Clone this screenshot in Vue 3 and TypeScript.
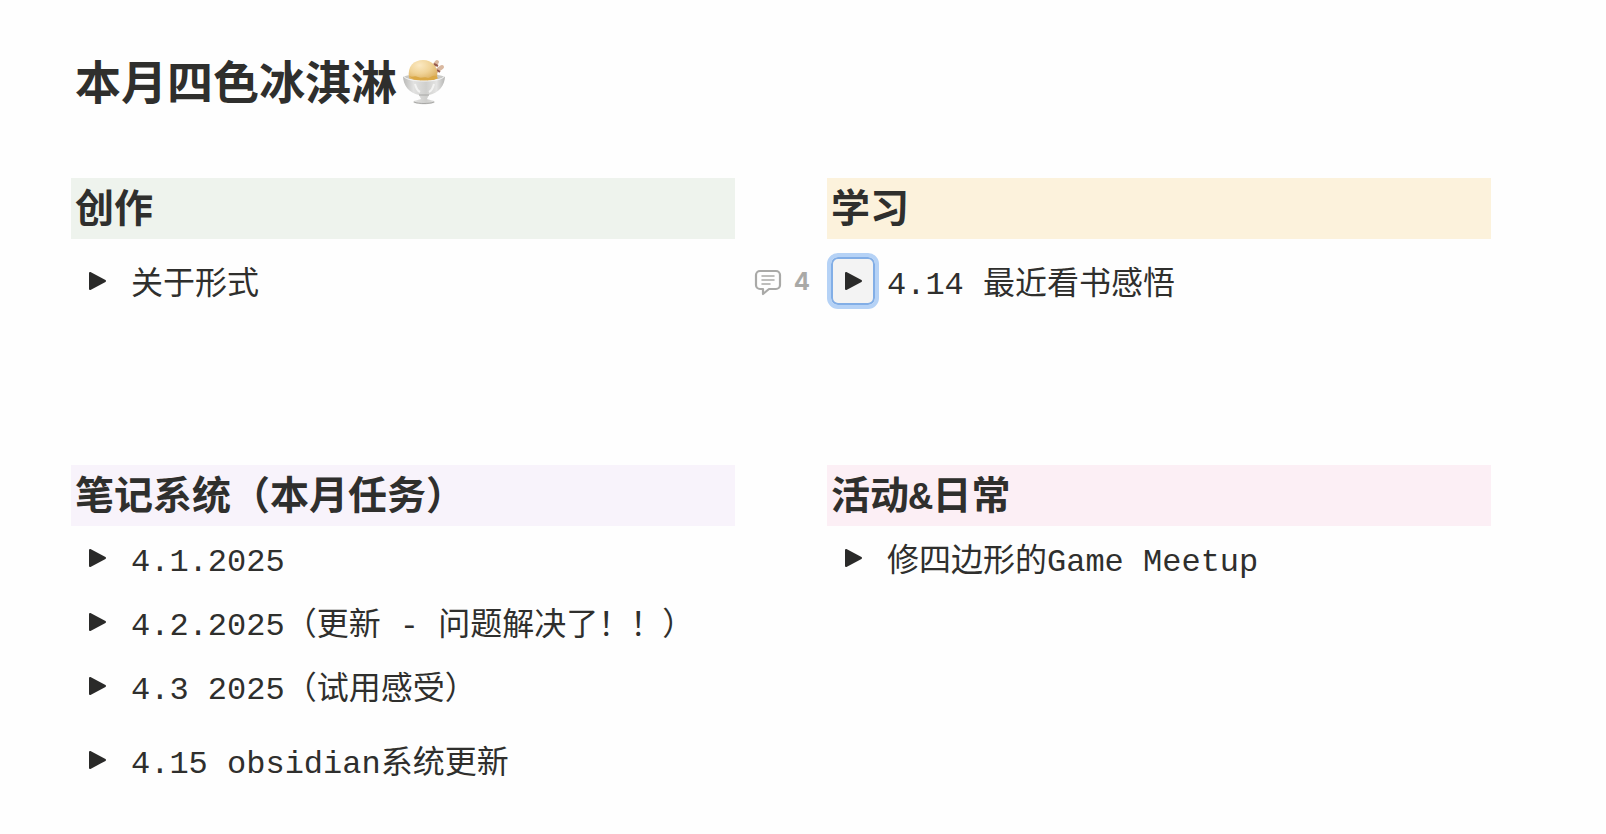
<script setup lang="ts">
interface Entry {
  text: string
  comments?: number
  focused?: boolean
  spaced?: boolean
}

interface Section {
  title: string
  tone: 'green' | 'yellow' | 'purple' | 'pink'
  entries: Entry[]
}

const sections: Section[] = [
  { title: '创作', tone: 'green', entries: [{ text: '关于形式', spaced: true }] },
  {
    title: '学习',
    tone: 'yellow',
    entries: [{ text: '4.14 最近看书感悟', comments: 4, focused: true, spaced: true }],
  },
  {
    title: '笔记系统（本月任务）',
    tone: 'purple',
    entries: [
      { text: '4.1.2025' },
      { text: '4.2.2025（更新 - 问题解决了！！）' },
      { text: '4.3 2025（试用感受）' },
      { text: '4.15 obsidian系统更新', spaced: true },
    ],
  },
  { title: '活动&日常', tone: 'pink', entries: [{ text: '修四边形的Game Meetup' }] },
]
</script>

<template>
  <main class="page">
    <h1 class="title">
      <span class="title-text">本月四色冰淇淋</span>
      <svg class="sundae" viewBox="0 0 44 46" role="img" aria-label="冰淇淋">
        <defs>
          <radialGradient id="scoop" cx="0.38" cy="0.25" r="0.8">
            <stop offset="0" stop-color="#fbe9c2" />
            <stop offset="0.5" stop-color="#f0d397" />
            <stop offset="1" stop-color="#d9ab58" />
          </radialGradient>
          <linearGradient id="glass" x1="0" x2="1" y1="0" y2="0">
            <stop offset="0" stop-color="#b9b9b7" />
            <stop offset="0.25" stop-color="#e2e2e1" />
            <stop offset="0.55" stop-color="#cfcfcd" />
            <stop offset="0.8" stop-color="#e4e4e3" />
            <stop offset="1" stop-color="#b5b5b3" />
          </linearGradient>
        </defs>
        <path d="M30 9 35 3M33 13l7-5" stroke="#d9b8a0" stroke-width="4" stroke-linecap="round" />
        <path d="m32 5 4 2m-1 4 3 2" stroke="#96594b" stroke-width="2" />
        <ellipse cx="22" cy="18" rx="20" ry="3" fill="#c9c9c6" />
        <path d="M7 19C5 7 12 1 21 1s16 7 14 18c-4 4-23 4-28 0Z" fill="url(#scoop)" />
        <path d="M7 17c4 2 5-1 9 1 4 2 6-1 10 1 3 0 4-3 8-2l2 2c-5 4-24 4-29-2Z" fill="#dba946" />
        <path d="M1 17c3 4 11 5 21 5s18-1 21-5c0 9-6 17-16 19l-2 4c1 1 7 1 8 3 0 3-22 3-22 0 1-2 7-2 8-3l-2-4C7 34 1 26 1 17Z" fill="url(#glass)" />
        <path d="M1 17c4 4 11 5 21 5s17-1 21-5" fill="none" stroke="#f2f2f2" stroke-width="1" />
        <path d="M17 36h10M12 43c5 2 15 2 20 0" fill="none" stroke="#a8a8a6" stroke-width="1" />
        <path d="M13 25c1 4 3 7 5 8M32 25c-1 4-3 7-5 8" fill="none" stroke="#f3f3f2" stroke-width="2" />
      </svg>
    </h1>

    <div class="board">
      <section v-for="section in sections" :key="section.title">
        <h2 class="heading" :class="section.tone">{{ section.title }}</h2>
        <ul class="entries">
          <li
            v-for="entry in section.entries"
            :key="entry.text"
            class="entry"
            :class="{ spaced: entry.spaced }"
          >
            <button v-if="entry.comments" class="comments" type="button" :aria-label="entry.comments + ' 条评论'">
              <svg viewBox="0 0 28 28" width="28" height="28" fill="none" stroke="currentColor" aria-hidden="true">
                <path d="M6 3h16a4 4 0 0 1 4 4v10a4 4 0 0 1-4 4h-7l-6 5v-5H6a4 4 0 0 1-4-4V7a4 4 0 0 1 4-4Z" stroke-width="2.200" stroke-linejoin="round" />
                <path d="M8 8h12M8 12h12M8 16h8" stroke-width="1.500" stroke-linecap="round" />
              </svg>
              <span>{{ entry.comments }}</span>
            </button>
            <button
              class="toggle"
              :class="{ focused: entry.focused }"
              type="button"
              aria-expanded="false"
              :aria-label="'展开 ' + entry.text"
            >
              <svg viewBox="0 0 18 20" width="18" height="20" aria-hidden="true">
                <path d="M2 2v16L17 10Z" fill="currentColor" stroke="currentColor" stroke-width="2" stroke-linejoin="round" />
              </svg>
            </button>
            <span class="text">{{ entry.text }}</span>
          </li>
        </ul>
      </section>
    </div>
  </main>
</template>

<style>
body {
  margin: 0;
  background: #fefefe;
}
</style>

<style scoped>
.page {
  padding: 48px 115px 40px 71px;
  color: #2f2f2d;
  font-family: "Liberation Mono", "Noto Sans CJK SC", monospace;
}

.title {
  display: flex;
  align-items: center;
  gap: 5px;
  height: 68px;
  margin: 0 0 62px;
  padding-left: 4px;
  font-size: 46px;
  font-weight: 700;
  line-height: 60px;
}

.title-text {
  padding-top: 10px;
}

.sundae {
  width: 44px;
  height: 46px;
  fill: none;
}

.board {
  display: grid;
  grid-template-columns: repeat(2, minmax(0, 1fr));
  gap: 152px 92px;
}

.heading {
  margin: 0;
  padding: 8px 4px 0;
  font-size: 39px;
  font-weight: 700;
  line-height: 53px;
}

.green {
  background: #eef3ed;
}

.yellow {
  background: #fcf2dc;
}

.purple {
  background: #f8f3fb;
}

.pink {
  background: #fceff5;
}

.entries {
  margin: 0;
  padding: 0;
  list-style: none;
}

.entry {
  position: relative;
  display: flex;
  align-items: center;
  gap: 8px;
  min-height: 64px;
}

.spaced {
  margin-top: 10px;
}

.text {
  padding-top: 10px;
  font-size: 32px;
  line-height: 48px;
  white-space: nowrap;
}

.toggle {
  display: flex;
  flex: none;
  align-items: center;
  justify-content: center;
  width: 52px;
  height: 56px;
  padding: 0;
  border: 4px solid transparent;
  border-radius: 11px;
  background: transparent;
  color: #2a2a29;
}

.toggle.focused {
  border-color: #b5d2f6;
  background: #f3f3f3;
  box-shadow: inset 0 0 0 2px #82aee6;
}

.comments {
  position: absolute;
  right: 100%;
  display: flex;
  align-items: center;
  gap: 12px;
  margin-right: 17px;
  padding: 2px 0 0;
  border: 0;
  background: transparent;
  color: #a9a9a7;
  font-family: Inter, "Noto Sans", sans-serif;
  font-size: 24px;
  font-weight: 700;
  line-height: 32px;
}
</style>
